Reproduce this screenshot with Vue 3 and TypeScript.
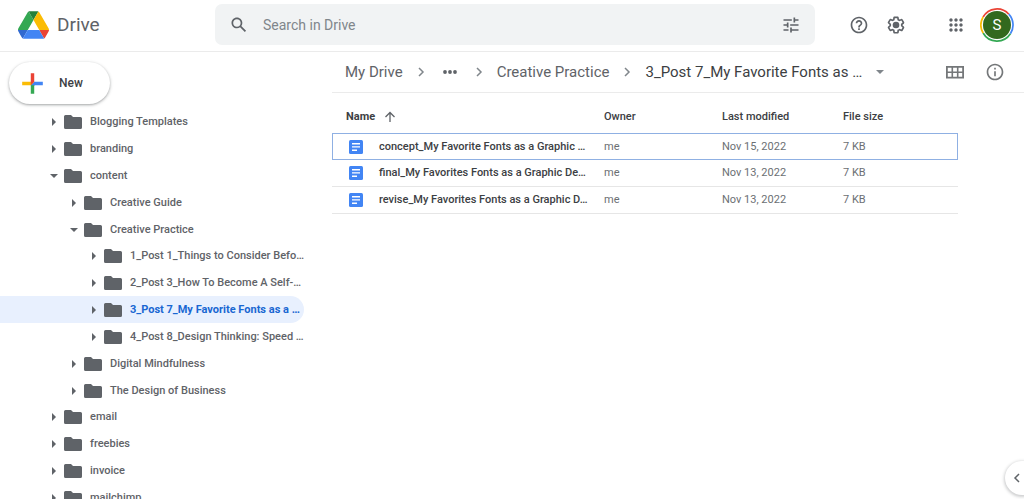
<script setup lang="ts">
import { ref } from 'vue'

interface Folder {
  name: string
  depth: number
  open?: boolean
}

interface DriveFile {
  name: string
  owner: string
  modified: string
  size: string
}

const query = ref('')
const selectedFolder = ref(7)
const selectedFile = ref(0)

const folders: Folder[] = [
  { name: 'Blogging Templates', depth: 0 },
  { name: 'branding', depth: 0 },
  { name: 'content', depth: 0, open: true },
  { name: 'Creative Guide', depth: 1 },
  { name: 'Creative Practice', depth: 1, open: true },
  { name: '1_Post 1_Things to Consider Befo…', depth: 2 },
  { name: '2_Post 3_How To Become A Self-…', depth: 2 },
  { name: '3_Post 7_My Favorite Fonts as a …', depth: 2 },
  { name: '4_Post 8_Design Thinking: Speed …', depth: 2 },
  { name: 'Digital Mindfulness', depth: 1 },
  { name: 'The Design of Business', depth: 1 },
  { name: 'email', depth: 0 },
  { name: 'freebies', depth: 0 },
  { name: 'invoice', depth: 0 },
  { name: 'mailchimp', depth: 0 },
]

const files: DriveFile[] = [
  { name: 'concept_My Favorite Fonts as a Graphic …', owner: 'me', modified: 'Nov 15, 2022', size: '7 KB' },
  { name: 'final_My Favorites Fonts as a Graphic De…', owner: 'me', modified: 'Nov 13, 2022', size: '7 KB' },
  { name: 'revise_My Favorites Fonts as a Graphic D…', owner: 'me', modified: 'Nov 13, 2022', size: '7 KB' },
]
</script>

<template>
  <div class="page">
    <header class="topbar">
      <a class="brand" href="#">
        <svg class="logo" viewBox="0 0 87.3 78" aria-hidden="true">
          <path fill="#3069d0" d="m6.6 66.85 3.85 6.65c.8 1.4 1.95 2.5 3.3 3.3l13.75-23.8h-27.5c0 1.55.4 3.1 1.2 4.5z" />
          <path fill="#34a853" d="m43.65 25-13.75-23.8c-1.35.8-2.5 1.9-3.3 3.3l-25.4 44a9.06 9.06 0 0 0-1.2 4.5h27.5z" />
          <path fill="#ea4335" d="m73.55 76.8c1.35-.8 2.5-1.9 3.3-3.3l1.6-2.75 7.65-13.25c.8-1.4 1.2-2.95 1.2-4.5h-27.5z" />
          <path fill="#25813b" d="m43.65 25 13.75-23.8c-1.35-.8-2.9-1.2-4.5-1.2h-18.5c-1.6 0-3.15.45-4.5 1.2z" />
          <path fill="#4285f4" d="m59.8 53h-32.3l-13.75 23.8c1.35.8 2.9 1.2 4.5 1.2h50.8c1.6 0 3.15-.45 4.5-1.2z" />
          <path fill="#fbbc04" d="m73.4 26.5-12.7-22c-.8-1.4-1.95-2.5-3.3-3.3l-13.75 23.8 16.15 28h27.45c0-1.55-.4-3.1-1.2-4.5z" />
        </svg>
        <span>Drive</span>
      </a>

      <form class="search" role="search" @submit.prevent>
        <button class="icon-btn" type="submit" aria-label="Search">
          <svg viewBox="0 0 24 24"><path d="M20.49 19l-5.73-5.73C15.53 12.2 16 10.91 16 9.5 16 5.91 13.09 3 9.5 3S3 5.91 3 9.5 5.91 16 9.5 16c1.41 0 2.7-.47 3.77-1.24L19 20.49 20.49 19zM5 9.5C5 7.01 7.01 5 9.5 5S14 7.01 14 9.5 11.99 14 9.5 14 5 11.99 5 9.5z" /></svg>
        </button>
        <input v-model="query" type="text" placeholder="Search in Drive" aria-label="Search in Drive" />
        <button class="icon-btn" type="button" aria-label="Search options">
          <svg viewBox="0 0 24 24"><path d="M3 17v2h6v-2H3zM3 5v2h10V5H3zm10 16v-2h8v-2h-8v-2h-2v6h2zM7 9v2H3v2h4v2h2V9H7zm14 4v-2H11v2h10zm-6-4h2V7h4V5h-4V3h-2v6z" /></svg>
        </button>
      </form>

      <div class="actions">
        <button class="icon-btn" type="button" aria-label="Support">
          <svg viewBox="0 0 24 24"><path d="M11 18h2v-2h-2v2zm1-16C6.48 2 2 6.48 2 12s4.48 10 10 10 10-4.48 10-10S17.52 2 12 2zm0 18c-4.41 0-8-3.59-8-8s3.59-8 8-8 8 3.59 8 8-3.59 8-8 8zm0-14c-2.21 0-4 1.79-4 4h2c0-1.1.9-2 2-2s2 .9 2 2c0 2-3 1.75-3 5h2c0-2.25 3-2.5 3-5 0-2.21-1.79-4-4-4z" /></svg>
        </button>
        <button class="icon-btn" type="button" aria-label="Settings">
          <svg viewBox="0 0 24 24"><path d="M13.85 22.25h-3.7c-.74 0-1.36-.54-1.45-1.27l-.27-1.89c-.27-.14-.53-.29-.79-.46l-1.8.72c-.7.26-1.47-.03-1.81-.65L2.2 15.53c-.35-.66-.2-1.44.36-1.88l1.53-1.19c-.01-.15-.02-.3-.02-.46 0-.15.01-.31.02-.46l-1.52-1.19c-.59-.45-.74-1.26-.37-1.88l1.85-3.19c.34-.62 1.11-.9 1.79-.63l1.81.73c.26-.17.52-.32.78-.46l.27-1.91c.09-.7.71-1.25 1.44-1.25h3.7c.74 0 1.36.54 1.45 1.27l.27 1.89c.27.14.53.29.79.46l1.8-.72c.71-.26 1.48.03 1.82.65l1.84 3.18c.36.66.2 1.44-.36 1.88l-1.52 1.19c.01.15.02.3.02.46s-.01.31-.02.46l1.52 1.19c.56.45.72 1.23.37 1.86l-1.86 3.22c-.34.62-1.11.9-1.8.63l-1.8-.72c-.26.17-.52.32-.78.46l-.27 1.91c-.1.68-.72 1.22-1.46 1.22zm-3.23-2h2.76l.37-2.55.53-.22c.44-.18.88-.44 1.34-.78l.45-.34 2.38.96 1.38-2.4-2.03-1.58.07-.56c.03-.26.06-.51.06-.78s-.03-.53-.06-.78l-.07-.56 2.03-1.58-1.39-2.4-2.39.96-.45-.35c-.42-.32-.87-.58-1.33-.77l-.52-.22-.37-2.55h-2.76l-.37 2.55-.53.21c-.44.19-.88.44-1.34.79l-.45.33-2.38-.95-1.39 2.39 2.03 1.58-.07.56a7 7 0 0 0-.06.79c0 .26.02.53.06.78l.07.56-2.03 1.58 1.38 2.4 2.39-.96.45.35c.43.33.86.58 1.33.77l.53.22.38 2.55z" /><circle cx="12" cy="12" r="4" /></svg>
        </button>
        <button class="icon-btn apps" type="button" aria-label="Google apps">
          <svg viewBox="0 0 24 24"><path d="M6 8c1.1 0 2-.9 2-2s-.9-2-2-2-2 .9-2 2 .9 2 2 2zm6 12c1.1 0 2-.9 2-2s-.9-2-2-2-2 .9-2 2 .9 2 2 2zm-6 0c1.1 0 2-.9 2-2s-.9-2-2-2-2 .9-2 2 .9 2 2 2zm0-6c1.1 0 2-.9 2-2s-.9-2-2-2-2 .9-2 2 .9 2 2 2zm6 0c1.1 0 2-.9 2-2s-.9-2-2-2-2 .9-2 2 .9 2 2 2zm4-8c0 1.1.9 2 2 2s2-.9 2-2-.9-2-2-2-2 .9-2 2zm-4 2c1.1 0 2-.9 2-2s-.9-2-2-2-2 .9-2 2 .9 2 2 2zm6 6c1.1 0 2-.9 2-2s-.9-2-2-2-2 .9-2 2 .9 2 2 2zm0 6c1.1 0 2-.9 2-2s-.9-2-2-2-2 .9-2 2 .9 2 2 2z" /></svg>
        </button>
        <button class="avatar" type="button" aria-label="Account">
          <svg class="ring" viewBox="0 0 34 34" fill="none" stroke-width="1.7" aria-hidden="true">
            <path stroke="#ea4335" d="M3.1 9A16 16 0 0 1 28.8 6.2" />
            <path stroke="#4285f4" d="M28.8 6.2A16 16 0 0 1 30.4 25.8" />
            <path stroke="#34a853" d="M30.4 25.8A16 16 0 0 1 3.1 25" />
            <path stroke="#fbbc04" d="M3.1 25A16 16 0 0 1 3.1 9" />
          </svg>
          <span>S</span>
        </button>
      </div>
    </header>

    <div class="body">
      <nav class="sidebar" aria-label="Folders">
        <button class="new-btn" type="button">
          <svg viewBox="0 0 36 36" aria-hidden="true">
            <path fill="#34a853" d="M16 16v14h4V20z" />
            <path fill="#4285f4" d="M30 16H20l-4 4h14z" />
            <path fill="#fbbc04" d="M6 16v4h10l4-4z" />
            <path fill="#ea4335" d="M20 16V6h-4v14z" />
          </svg>
          New
        </button>
        <ul class="tree">
          <li
            v-for="(folder, i) in folders"
            :key="folder.name"
            :class="['node', `depth-${folder.depth}`, { selected: i === selectedFolder }]"
          >
            <button class="toggle" type="button" :aria-label="`Toggle ${folder.name}`" :aria-expanded="!!folder.open">
              <svg viewBox="0 0 10 10"><path :d="folder.open ? 'M1 3h8L5 7z' : 'M3 1v8l4-4z'" /></svg>
            </button>
            <a href="#" @click.prevent="selectedFolder = i">
              <svg class="folder" viewBox="0 0 18 14" aria-hidden="true">
                <path d="M1.500 0H7l2 2h7.500A1.500 1.500 0 0 1 18 3.500v9a1.500 1.500 0 0 1-1.500 1.500h-15A1.500 1.500 0 0 1 0 12.500v-11A1.500 1.500 0 0 1 1.500 0z" />
              </svg>
              <span>{{ folder.name }}</span>
            </a>
          </li>
        </ul>
      </nav>

      <main class="main">
        <div class="pathbar">
          <nav class="crumbs" aria-label="Breadcrumb">
            <a href="#">My Drive</a>
            <svg class="sep" viewBox="0 0 12 12"><path d="M4 2l4 4-4 4" /></svg>
            <button class="more" type="button" aria-label="Show path">
              <svg viewBox="0 0 14 4"><circle cx="2" cy="2" r="1.900" /><circle cx="7" cy="2" r="1.900" /><circle cx="12" cy="2" r="1.900" /></svg>
            </button>
            <svg class="sep" viewBox="0 0 12 12"><path d="M4 2l4 4-4 4" /></svg>
            <a href="#">Creative Practice</a>
            <svg class="sep" viewBox="0 0 12 12"><path d="M4 2l4 4-4 4" /></svg>
            <button class="current" type="button">
              3_Post 7_My Favorite Fonts as …
              <svg viewBox="0 0 8 4" aria-hidden="true"><path d="M0 0h8L4 4z" /></svg>
            </button>
          </nav>
          <div class="view-actions">
            <button class="icon-btn" type="button" aria-label="Grid view">
              <svg viewBox="0 0 20 20"><path fill-rule="evenodd" d="M1 4h18v12.500H1zM2.800 5.700v3.700h3.700V5.700zm5.300 0v3.700h3.800V5.700zm5.400 0v3.700h3.700V5.700zM2.800 11v3.800h3.700V11zm5.300 0v3.800h3.800V11zm5.400 0v3.800h3.700V11z" /></svg>
            </button>
            <button class="icon-btn" type="button" aria-label="View details">
              <svg viewBox="0 0 24 24"><path d="M11 17h2v-6h-2v6zm1-15C6.48 2 2 6.48 2 12s4.48 10 10 10 10-4.48 10-10S17.52 2 12 2zm0 18c-4.41 0-8-3.59-8-8s3.59-8 8-8 8 3.59 8 8-3.59 8-8 8zM11 9h2V7h-2v2z" /></svg>
            </button>
          </div>
        </div>

        <table class="files">
          <thead>
            <tr>
              <th class="col-name" scope="col">
                <button class="sort" type="button">
                  Name
                  <svg viewBox="0 0 12 12" aria-hidden="true"><path d="M6 11V1.500M1.500 6L6 1.500 10.500 6" /></svg>
                </button>
              </th>
              <th class="col-owner" scope="col">Owner</th>
              <th class="col-modified" scope="col">Last modified</th>
              <th class="col-size" scope="col">File size</th>
            </tr>
          </thead>
          <tbody>
            <tr
              v-for="(file, i) in files"
              :key="file.name"
              :class="{ focused: i === selectedFile }"
              @click="selectedFile = i"
            >
              <td class="name-cell">
                <div class="name">
                  <svg viewBox="0 0 14 14" aria-hidden="true">
                    <rect width="14" height="14" rx="1.500" fill="#4285f4" />
                    <path fill="#fff" d="M3 3h8v1.400H3zM3 6.200h8v1.400H3zM3 9.500h5v1.400H3z" />
                  </svg>
                  <span>{{ file.name }}</span>
                </div>
              </td>
              <td>{{ file.owner }}</td>
              <td>{{ file.modified }}</td>
              <td>{{ file.size }}</td>
            </tr>
          </tbody>
        </table>
      </main>
    </div>

    <button class="panel-toggle" type="button" aria-label="Show side panel">
      <svg viewBox="0 0 8 10"><path d="M6 1L2 5l4 4" /></svg>
    </button>
  </div>
</template>

<style>
body {
  margin: 0;
  background: #fff;
}
</style>

<style scoped>
.page {
  position: relative;
  display: flex;
  flex-direction: column;
  height: 100vh;
  overflow: hidden;
  font-family: Roboto, "Liberation Sans", sans-serif;
  font-size: 11px;
  line-height: 16px;
  color: #5f6368;
}

button {
  margin: 0;
  padding: 0;
  border: 0;
  background: none;
  font: inherit;
  color: inherit;
  cursor: pointer;
}

a {
  color: inherit;
  text-decoration: none;
}

ul {
  margin: 0;
  padding: 0;
  list-style: none;
}

svg {
  display: block;
  flex: none;
  fill: currentColor;
}

.topbar {
  display: flex;
  align-items: center;
  flex: none;
  height: 49px;
  padding-bottom: 2px;
  border-bottom: 1px solid #ebebeb;
}

.brand {
  display: flex;
  align-items: center;
  gap: 8px;
  box-sizing: border-box;
  width: 215px;
  padding-left: 18px;
  font-size: 19px;
  line-height: 24px;
}

.logo {
  width: 31px;
  height: 28px;
}

.search {
  display: flex;
  align-items: center;
  flex: 1;
  box-sizing: border-box;
  height: 41px;
  padding: 0 14px;
  border-radius: 7px;
  background: #f1f3f4;
}

.search input {
  flex: 1;
  min-width: 0;
  margin: 0;
  padding: 0 14px;
  border: 0;
  outline: 0;
  background: none;
  font: inherit;
  font-size: 14px;
  color: #3c4043;
}

.search input::placeholder {
  color: #80868b;
  opacity: 1;
}

.icon-btn svg {
  width: 20px;
  height: 20px;
}

.actions {
  display: flex;
  align-items: center;
  box-sizing: border-box;
  width: 209px;
  padding-left: 34px;
  gap: 17px;
}

.apps {
  margin-left: 23px;
}

.avatar {
  display: grid;
  place-items: center;
  width: 34px;
  height: 34px;
  margin-left: -3px;
}

.avatar > * {
  grid-area: 1 / 1;
}

.ring {
  width: 34px;
  height: 34px;
  fill: none;
}

.avatar span {
  width: 28px;
  height: 28px;
  border-radius: 50%;
  background: #33691e;
  color: #fff;
  font-size: 15px;
  line-height: 28px;
}

.body {
  display: flex;
  flex: 1;
  min-height: 0;
}

.sidebar {
  flex: none;
  box-sizing: border-box;
  width: 332px;
  padding-top: 10px;
  overflow: hidden;
}

.new-btn {
  display: flex;
  align-items: center;
  gap: 11px;
  height: 42px;
  margin: 0 0 4px 9px;
  padding: 0 27px 0 8px;
  border-radius: 21px;
  background: #fff;
  box-shadow: 0 1px 2px rgba(60, 64, 67, 0.3), 0 1px 3px 1px rgba(60, 64, 67, 0.15);
  font-size: 12px;
  font-weight: 500;
  color: #3c4043;
}

.new-btn svg {
  width: 31px;
  height: 31px;
}

.tree {
  margin-right: 28px;
}

.node {
  display: flex;
  align-items: center;
  height: 27px;
  padding-left: 49px;
  border-radius: 0 14px 14px 0;
  font-weight: 500;
  white-space: nowrap;
}

.depth-1 {
  padding-left: 69px;
}

.depth-2 {
  padding-left: 89px;
}

.depth-1 + .depth-2,
.depth-1 + .depth-0 {
  margin-top: -1px;
}

.selected {
  background: #e8f0fe;
}

.selected span {
  color: #1967d2;
  font-weight: 700;
}

.toggle svg {
  width: 10px;
  height: 10px;
}

.node a {
  display: flex;
  align-items: center;
  gap: 8px;
  margin-left: 5px;
}

.folder {
  width: 18px;
  height: 14px;
}

.main {
  flex: 1;
  min-width: 0;
}

.pathbar {
  display: flex;
  align-items: center;
  justify-content: space-between;
  height: 40px;
  padding: 0 19px 0 13px;
  border-bottom: 1px solid #ebebeb;
}

.crumbs {
  display: flex;
  align-items: center;
  gap: 12px;
  font-size: 15px;
  line-height: 20px;
  white-space: nowrap;
}

.sep {
  width: 12px;
  height: 12px;
  fill: none;
  stroke: #80868b;
  stroke-width: 1.5;
}

.more svg {
  width: 14px;
  height: 4px;
}

.more {
  padding: 0 4px;
}

.current {
  display: flex;
  align-items: center;
  gap: 14px;
  color: #3c4043;
}

.current svg {
  width: 8px;
  height: 4px;
  fill: #80868b;
}

.view-actions {
  display: flex;
  gap: 20px;
  color: #747779;
}

.files {
  width: calc(100% - 66px);
  table-layout: fixed;
  border-collapse: separate;
  border-spacing: 0;
  text-align: left;
}

.files th {
  height: 40px;
  padding: 8px 0 0;
  box-sizing: border-box;
  font-weight: 500;
  color: #3c4043;
}

.files .col-name {
  padding-left: 14px;
}

.col-owner {
  width: 118px;
}

.col-modified {
  width: 121px;
}

.col-size {
  width: 115px;
}

.sort {
  display: flex;
  align-items: center;
  gap: 9px;
  font-weight: 700;
}

.sort svg {
  width: 12px;
  height: 12px;
  fill: none;
  stroke: #5f6368;
  stroke-width: 1.3;
}

.files td {
  box-sizing: border-box;
  height: 27px;
  padding: 0;
  border-bottom: 1px solid #e6e6e6;
  color: #6b6f73;
  white-space: nowrap;
}

.files .name-cell {
  padding-left: 17px;
}

.name {
  display: flex;
  align-items: center;
  gap: 16px;
  font-weight: 500;
  color: #3c4043;
}

.name svg {
  width: 14px;
  height: 14px;
}

.files .focused td {
  border-top: 1px solid #8fb0e3;
  border-bottom-color: #8fb0e3;
}

.files .focused td:first-child {
  padding-left: 16px;
  border-left: 1px solid #8fb0e3;
}

.files .focused td:last-child {
  border-right: 1px solid #8fb0e3;
}

.panel-toggle {
  position: absolute;
  right: -15px;
  bottom: 4px;
  width: 34px;
  height: 34px;
  padding-left: 8px;
  border-radius: 50%;
  background: #fff;
  box-shadow: 0 1px 3px 1px rgba(60, 64, 67, 0.25);
}

.panel-toggle svg {
  width: 8px;
  height: 10px;
  fill: none;
  stroke: #5f6368;
  stroke-width: 1.5;
}
</style>
